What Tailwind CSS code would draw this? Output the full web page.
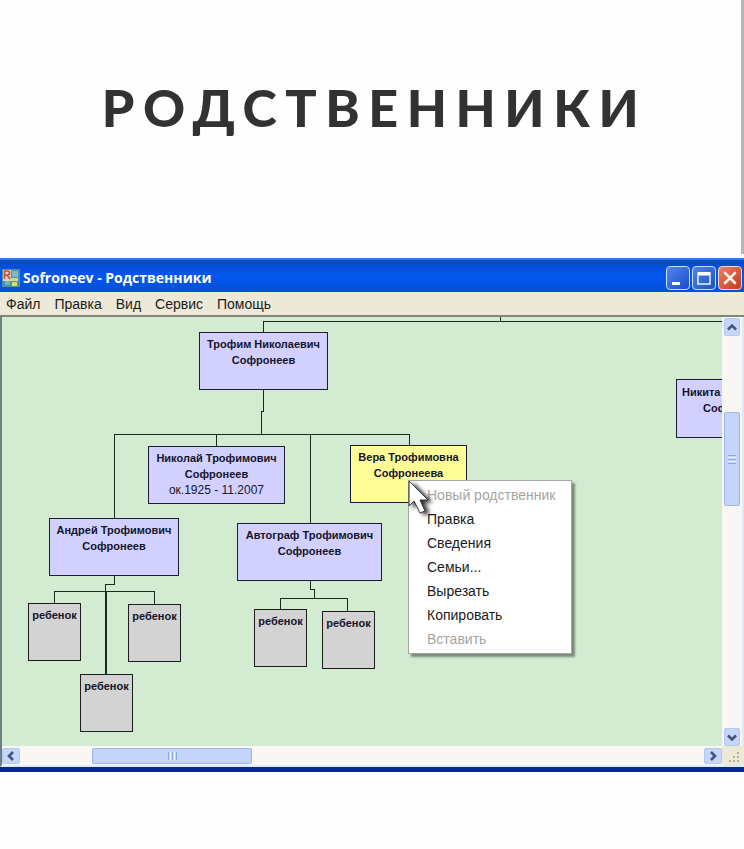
<!doctype html>
<html lang="ru">
  <head>
    <title>Родственники</title>
    <meta charset="utf-8">
    <meta name="viewport" content="width=device-width, initial-scale=1">
    <script src="https://cdn.jsdelivr.net/npm/@tailwindcss/browser@4"></script>
  </head>
  <body class="min-h-screen bg-[#fefefe] font-['Liberation_Sans',sans-serif] text-black">
  <header class="border-r-3 border-[#b5b5b5] pt-[73px] pb-[113px] mb-1 text-center">
    <h1 class="pl-2 font-['Lato',sans-serif] text-[52px] leading-[68px] font-black tracking-[0.165em] text-[#323234]">РОДСТВЕННИКИ</h1>
  </header>

  <main class="flex flex-col border-b-5 border-[#062a8c] bg-[#ece9d8]">
    <!-- title bar -->
    <div class="flex h-[34px] items-center gap-[3px] bg-linear-to-b from-[#0a48c8] via-[#0458ee] to-[#0450d8] border-t-2 border-[#2a7bf0] pt-1 px-[2px]">
      <svg class="size-[18px]" viewBox="0 0 18 18">
        <rect width="18" height="18" fill="#4d93a8"/>
        <rect x="1" y="1" width="8" height="11" fill="#cfd6c4"/>
        <path d="M2.500 10V2h3q2 0 2 2t-2 2h-3m2.500 0l3 4" fill="none" stroke="#d8452f" stroke-width="1.600"/>
        <rect x="10" y="2" width="6" height="6" fill="#82b6c8"/>
        <rect x="3" y="12" width="5" height="4" fill="#7fb0b0"/>
        <path d="M9 9h7v3H9z" fill="#e6d27a"/>
        <path d="M10 13h5v4h-5z" fill="#d8dc6c"/>
      </svg>
      <h2 class="flex-1 text-[14px] leading-5 font-bold text-white font-['Open_Sans',sans-serif] whitespace-nowrap">Sofroneev - Родственники</h2>
      <div class="flex gap-[2px]">
        <button aria-label="Свернуть" class="size-6 rounded border border-[#c9dcfb] bg-linear-to-br from-[#5586ee] to-[#1c49cc]">
          <svg class="size-full" viewBox="0 0 22 22"><path d="M5 15h8v3H5z" fill="#fff"/></svg>
        </button>
        <button aria-label="Развернуть" class="size-6 rounded border border-[#c9dcfb] bg-linear-to-br from-[#4f86e8] to-[#1c50c0]">
          <svg class="size-full" viewBox="0 0 22 22"><path d="M5 6h12v11H5zM5 7h12" fill="none" stroke="#e9f1ff" stroke-width="1.500"/><path d="M5 5h12v3.500H5z" fill="#fff"/></svg>
        </button>
        <button aria-label="Закрыть" class="size-6 rounded border border-[#f3d9d2] bg-linear-to-br from-[#e8805f] to-[#c23a1c]">
          <svg class="size-full" viewBox="0 0 22 22"><path d="M6 6l10 10M16 6L6 16" stroke="#fbeee6" stroke-width="2.600" stroke-linecap="round"/></svg>
        </button>
      </div>
    </div>

    <!-- menu bar -->
    <nav class="flex h-[23px] items-center gap-[14px] px-[6px] text-[14px] leading-5 text-[#1b1b1b]">
      <button>Файл</button>
      <button>Правка</button>
      <button>Вид</button>
      <button>Сервис</button>
      <button>Помощь</button>
    </nav>

    <div class="flex border-t-2 border-l-2 border-t-[#82857a] border-l-[#6f7f86]">
      <!-- family tree -->
      <section class="relative min-w-0 flex-1 overflow-hidden bg-[#d3ebd1] text-center text-[11px] leading-4 font-bold text-[#14142c]">
        <svg class="block h-[429px] w-[720px]" viewBox="0 0 720 429" fill="none" stroke="#142c18" stroke-width="1" shape-rendering="crispEdges">
          <path d="M261 15V4H720M498 0V4"/>
          <path d="M261 73V94H259V117M112 201V117H407V128M214 117V129M308 117V206"/>
          <path d="M112 259V267H103V275M52 286V274H152V287" />
          <path d="M104 274V357" stroke-width="2"/>
          <path d="M308 264V272H312V281M278 292V281H345V294"/>
        </svg>
        <div class="absolute top-[15px] left-[197px] h-[58px] w-[129px] border border-[#1c1c30] bg-[#d2d0fe] pt-[3px]">Трофим Николаевич<br>Софронеев</div>
        <div class="absolute top-[129px] left-[146px] h-[58px] w-[137px] border border-[#1c1c30] bg-[#d2d0fe] pt-[3px]">Николай Трофимович<br>Софронеев<br><span class="text-[12px] font-normal">ок.1925 - 11.2007</span></div>
        <div class="absolute top-[128px] left-[348px] h-[58px] w-[117px] border border-[#1c1c30] bg-[#fffd98] pt-[3px]">Вера Трофимовна<br>Софронеева</div>
        <div class="absolute top-[201px] left-[47px] h-[58px] w-[130px] border border-[#1c1c30] bg-[#d2d0fe] pt-[3px]">Андрей Трофимович<br>Софронеев</div>
        <div class="absolute top-[206px] left-[235px] h-[58px] w-[145px] border border-[#1c1c30] bg-[#d2d0fe] pt-[3px]">Автограф Трофимович<br>Софронеев</div>
        <!-- runs past the right edge of the view -->
        <div class="absolute top-[62px] left-[674px] h-[59px] w-[129px] border border-[#1c1c30] bg-[#d2d0fe] pt-1 pl-[5px] text-left">Никита<br><span class="pl-[21px]">Софронеев</span></div>

        <div class="absolute top-[286px] left-[26px] h-[58px] w-[53px] border border-[#1c1c1c] bg-[#d3d3d3] pt-[3px]">ребенок</div>
        <div class="absolute top-[287px] left-[126px] h-[58px] w-[53px] border border-[#1c1c1c] bg-[#d3d3d3] pt-[3px]">ребенок</div>
        <div class="absolute top-[357px] left-[78px] h-[58px] w-[53px] border border-[#1c1c1c] bg-[#d3d3d3] pt-[3px]">ребенок</div>
        <div class="absolute top-[292px] left-[252px] h-[58px] w-[53px] border border-[#1c1c1c] bg-[#d3d3d3] pt-[3px]">ребенок</div>
        <div class="absolute top-[294px] left-[320px] h-[58px] w-[53px] border border-[#1c1c1c] bg-[#d3d3d3] pt-[3px]">ребенок</div>

        <!-- context menu -->
        <div class="absolute top-[163px] left-[406px] flex w-[164px] flex-col border border-[#a3a79c] bg-white py-[2px] text-[14px] leading-6 font-normal text-[#1b1b1b] shadow-[3px_3px_2px_#7d8a7c]">
          <button class="pl-[18px] text-left text-[#a5a5a0]" disabled>Новый родственник</button>
          <button class="pl-[18px] text-left">Правка</button>
          <button class="pl-[18px] text-left">Сведения</button>
          <button class="pl-[18px] text-left">Семьи...</button>
          <button class="pl-[18px] text-left">Вырезать</button>
          <button class="pl-[18px] text-left">Копировать</button>
          <button class="pl-[18px] text-left text-[#a5a5a0]" disabled>Вставить</button>
        </div>
        <svg class="absolute top-[162px] left-[405px] h-[38px] w-[30px] drop-shadow-[4px_2px_2px_#000000cc]" viewBox="0 0 30 38">
          <path d="M2 2V27L7 22L13 34L18 32L13 21H21Z" fill="#fff" stroke="#333" stroke-width="1"/>
        </svg>
      </section>

      <!-- vertical scroll bar -->
      <div class="flex w-[22px] flex-col items-center border-r-2 border-[#dfe9f8] bg-[#f8f7f3]">
        <button aria-label="Вверх" class="mt-px h-[18px] w-4 rounded-xs border border-[#b4c8f0] bg-[#c6d5fc]">
          <svg class="size-full" viewBox="0 0 14 16"><path d="M3 10.500L7 6.500L11 10.500" fill="none" stroke="#42567c" stroke-width="2.600"/></svg>
        </button>
        <div class="mt-[76px] flex h-[94px] w-4 flex-col items-center justify-center gap-px rounded-xs border border-[#9fb6e4] bg-[#c5d4fb]">
          <i class="h-px w-2 bg-[#8ea8e0]"></i>
          <i class="h-px w-2 bg-[#eef4fe]"></i>
          <i class="h-px w-2 bg-[#8ea8e0]"></i>
          <i class="h-px w-2 bg-[#eef4fe]"></i>
          <i class="h-px w-2 bg-[#8ea8e0]"></i>
        </div>
        <button aria-label="Вниз" class="mt-auto h-[18px] w-4 rounded-xs border border-[#b4c8f0] bg-[#c6d5fc]">
          <svg class="size-full" viewBox="0 0 14 16"><path d="M3 6.500L7 10.500L11 6.500" fill="none" stroke="#42567c" stroke-width="2.600"/></svg>
        </button>
      </div>
    </div>

    <!-- horizontal scroll bar -->
    <div class="flex h-[21px] items-center border-b-2 border-l-2 border-b-[#dfeafa] border-l-[#6f7f86] bg-[#f8f7f3]">
      <button aria-label="Влево" class="h-4 w-[18px] rounded-xs border border-[#b4c8f0] bg-[#c6d5fc]">
        <svg class="size-full" viewBox="0 0 16 14"><path d="M10 3L6 7L10 11" fill="none" stroke="#42567c" stroke-width="2.600"/></svg>
      </button>
      <div class="ml-[72px] flex h-4 w-[160px] items-center justify-center gap-px rounded-xs border border-[#9fb6e4] bg-[#c5d4fb]">
        <i class="h-2 w-px bg-[#8ea8e0]"></i>
        <i class="h-2 w-px bg-[#eef4fe]"></i>
        <i class="h-2 w-px bg-[#8ea8e0]"></i>
        <i class="h-2 w-px bg-[#eef4fe]"></i>
        <i class="h-2 w-px bg-[#8ea8e0]"></i>
      </div>
      <button aria-label="Вправо" class="ml-auto h-4 w-[18px] rounded-xs border border-[#b4c8f0] bg-[#c6d5fc]">
        <svg class="size-full" viewBox="0 0 16 14"><path d="M6 3L10 7L6 11" fill="none" stroke="#42567c" stroke-width="2.600"/></svg>
      </button>
      <svg class="h-full w-[22px] bg-[#ece9d8]" viewBox="0 0 22 19">
        <path d="M15 6h2v2h-2zM15 10h2v2h-2zM15 14h2v2h-2zM11 10h2v2h-2zM11 14h2v2h-2zM7 14h2v2H7z" fill="#b5b09c"/>
      </svg>
    </div>
  </main>
  </body>
</html>
